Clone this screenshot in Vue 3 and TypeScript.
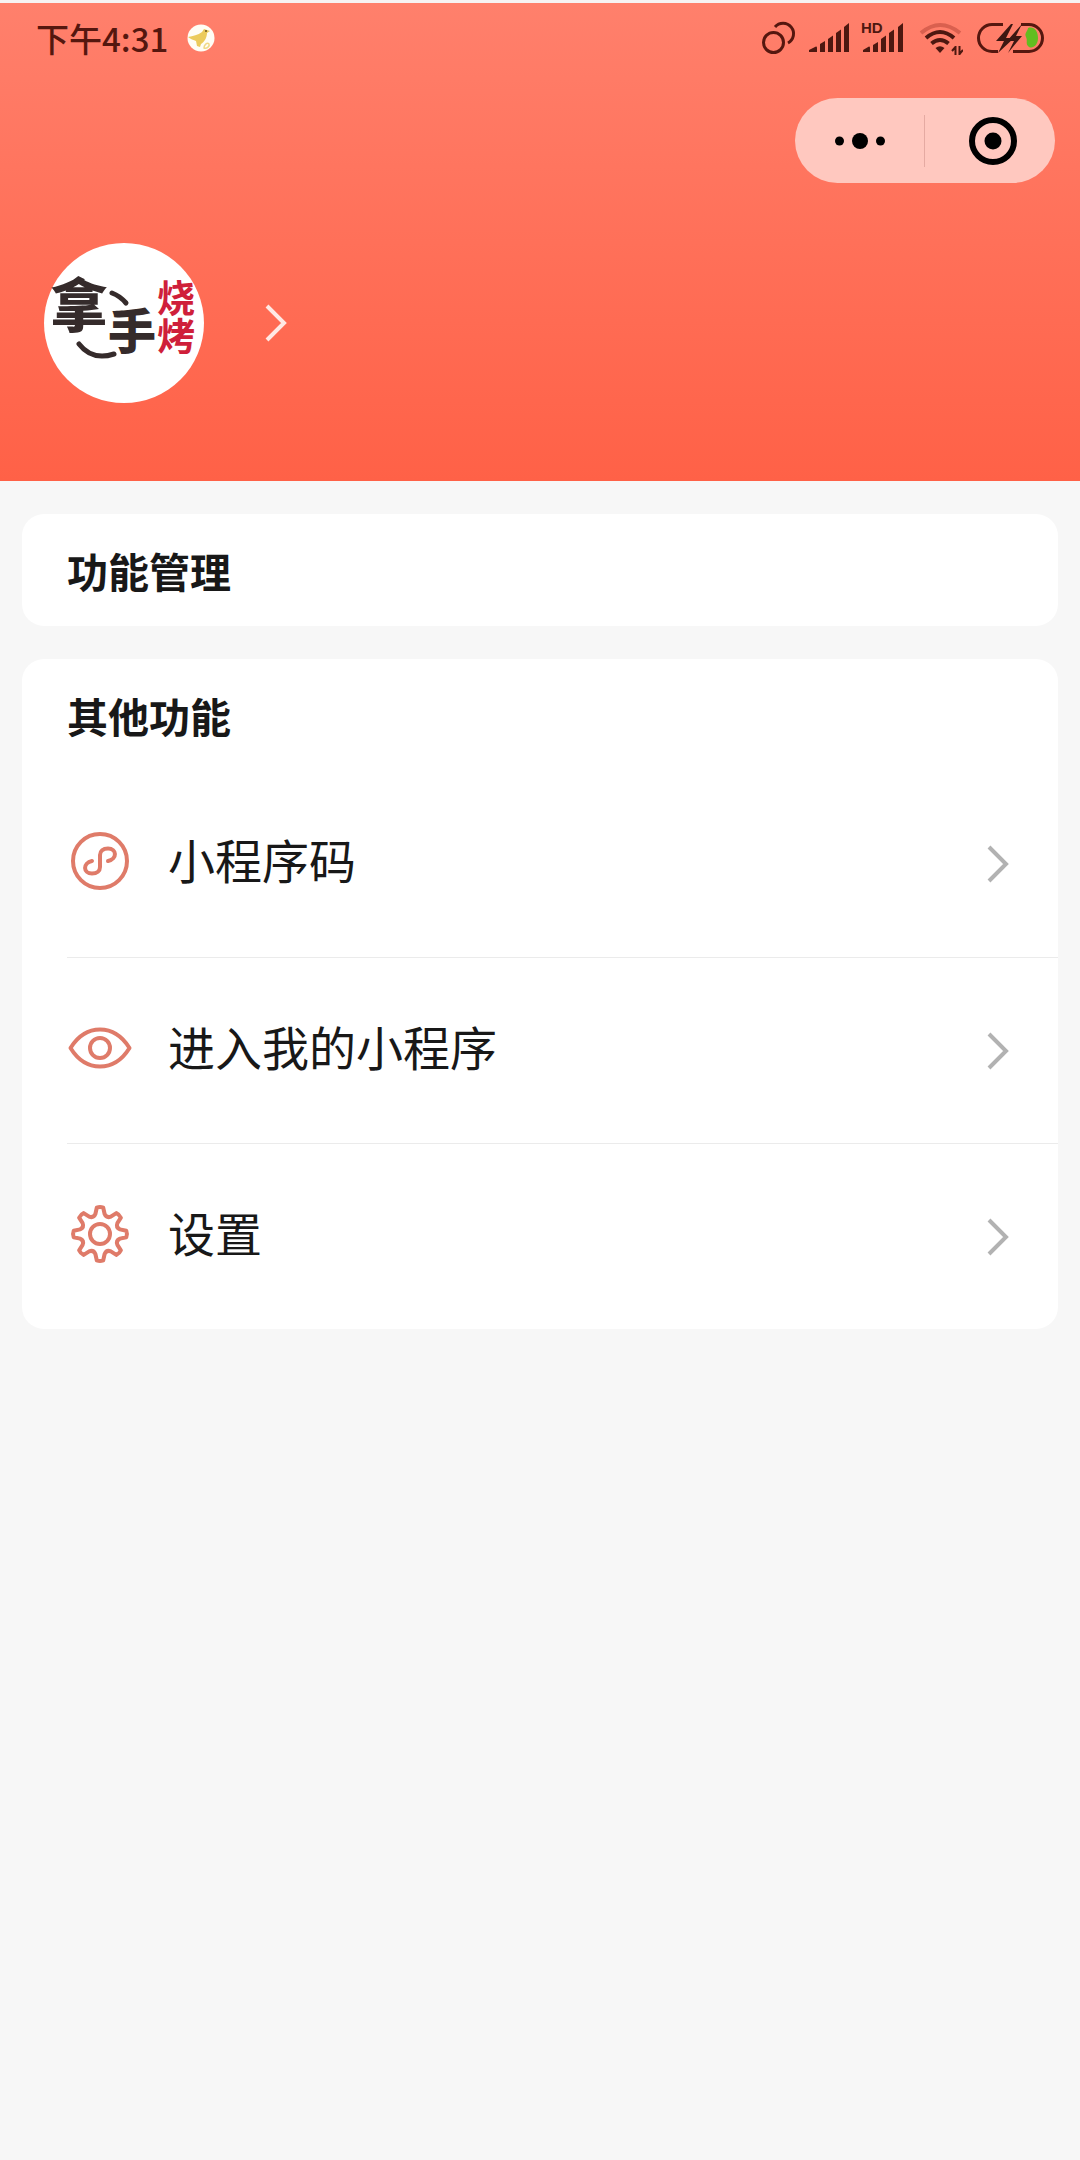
<script setup lang="ts">
type IconName = 'code' | 'eye' | 'gear'

interface MenuItem {
  icon: IconName
  label: string
}

const items: MenuItem[] = [
  { icon: 'code', label: '小程序码' },
  { icon: 'eye', label: '进入我的小程序' },
  { icon: 'gear', label: '设置' },
]

// Point on a circle around the centre of the 64px icon box.
function polar(radius: number, degrees: number): string {
  const a = ((degrees - 90) * Math.PI) / 180
  return `${(32 + radius * Math.cos(a)).toFixed(2)} ${(32 + radius * Math.sin(a)).toFixed(2)}`
}

// Outline of an eight-toothed gear with curved valleys.
function gearPath(): string {
  let d = `M${polar(26.5, -7)}`
  for (let i = 0; i < 8; i++) {
    const t = i * 45
    d += ` Q${polar(27.6, t)} ${polar(26.5, t + 7)}`
    d += ` L${polar(20.5, t + 13)}`
    d += ` Q${polar(17, t + 22.5)} ${polar(20.5, t + 32)}`
    d += ` L${polar(26.5, t + 38)}`
  }
  return d + 'Z'
}

const gear = gearPath()
</script>

<template>
  <div class="page">
    <header class="header">
      <div class="status">
        <span class="time">下午4:31</span>
        <svg class="bird" width="28" height="28" viewBox="0 0 28 28" aria-hidden="true">
          <circle cx="14" cy="14" r="13.5" fill="#fffdf5" />
          <path d="M1 13C6 12 11 11 15 8L17 5L20 6L23 7L20 9C20 14 17 18 14 20L13 23L10 22L9 17C7 16 3 15 1 13Z" fill="#eccb5c" />
          <path d="M17 24C17 21 20 18 22 20C23 22 20 25 17 24Z" fill="none" stroke="#f0d987" stroke-width="1.5" />
          <circle cx="19" cy="7" r="1" fill="#6b5320" />
        </svg>
        <div class="indicators">
          <svg width="35" height="34" viewBox="0 0 35 34" fill="none" stroke="#55170f" stroke-width="3" aria-hidden="true">
            <circle cx="11.5" cy="21.5" r="10" />
            <path d="M13 6A10.5 10.5 0 1 1 26 22" />
          </svg>
          <svg width="40" height="34" viewBox="0 0 40 34" fill="#4d1810" aria-hidden="true">
            <path d="M0 31V29L7 25.500Q8 25.500 8 26.500V31Z" />
            <path d="M11 23L16 20V31H11Z" />
            <path d="M19 18L24 14.500V31H19Z" />
            <path d="M27 12L32 8.500V31H27Z" />
            <path d="M35 6L40 2V31H35Z" />
          </svg>
          <svg class="spill" width="44" height="34" viewBox="0 0 44 34" fill="#4d1810" aria-hidden="true">
            <text class="hd" x="0" y="12">HD</text>
            <path d="M2 31V29L8 25.500Q9 25.500 9 26.500V31Z" />
            <path d="M12 24L17 21V31H12Z" />
            <path d="M20 18L25 14.500V31H20Z" />
            <path d="M28 12L33 8.500V31H28Z" />
            <path d="M37 6L42 2V31H37Z" />
          </svg>
          <svg width="46" height="34" viewBox="0 0 46 34" fill="none" stroke="#4d1810" stroke-width="4" aria-hidden="true">
            <path d="M4 12Q23 -4 43 12" stroke="#d9604f" />
            <path d="M9 17Q23 5 37 17" />
            <path d="M14.500 22.500Q23 15.500 31.500 22.500" />
            <path d="M18.500 27Q23 23.500 27.500 27L23 32Z" fill="#4d1810" stroke="none" />
            <path d="M38.500 25V34M42.500 25V34M38.500 26L35 30M42.500 33L46 29" stroke-width="2" />
          </svg>
          <svg width="70" height="34" viewBox="0 0 70 34" fill="none" aria-hidden="true">
            <path d="M53 7C59 5 63 10 63 17C63 24 58 28 54 26C50 23 53 20 51 16C49 12 53 10 53 7Z" fill="#62bd20" />
            <path d="M28 3.500H17A13.500 13.500 0 0 0 17 30.500H23M46 3.500H54A13.500 13.500 0 0 1 54 30.500H38" stroke="#55170f" stroke-width="3" />
            <path d="M36 3L21 20H29L23 32L39 17H31L38 3Z" fill="#3c1712" />
            <path d="M47 3L32 20H39L33 32L47 15H41Z" fill="#3c1712" />
          </svg>
        </div>
      </div>

      <div class="capsule">
        <button type="button" class="capsule-btn more" aria-label="更多">
          <svg width="52" height="52" viewBox="0 0 52 52" aria-hidden="true">
            <circle cx="5.500" cy="26" r="4.500" />
            <circle cx="26" cy="26" r="8" />
            <circle cx="46.500" cy="26" r="4.500" />
          </svg>
        </button>
        <button type="button" class="capsule-btn close" aria-label="关闭">
          <svg width="52" height="52" viewBox="0 0 52 52" aria-hidden="true">
            <circle cx="26" cy="26" r="21" fill="none" stroke="#000" stroke-width="6" />
            <circle cx="26" cy="26" r="8.500" />
          </svg>
        </button>
      </div>

      <a href="#" class="profile">
        <svg class="avatar spill" width="160" height="160" viewBox="0 0 160 160" role="img" aria-label="拿手烧烤">
          <circle cx="80" cy="80" r="80" fill="#fff" />
          <g fill="#352b2b">
            <text class="brush" x="6" y="84" font-size="58">拿</text>
            <text class="brush" x="64" y="106" font-size="48">手</text>
          </g>
          <g fill="none" stroke="#352b2b" stroke-linecap="round">
            <path d="M68 50Q76 53 82 60" stroke-width="5" />
            <path d="M35 101Q48 118 70 111" stroke-width="5" />
          </g>
          <text class="side" x="132" y="36" font-size="38" fill="#cf1f3a">烧烤</text>
        </svg>
        <svg class="chevron" width="24" height="40" viewBox="0 0 24 40" aria-hidden="true">
          <path d="M3 3L20 20L3 37" />
        </svg>
      </a>
    </header>

    <main class="content">
      <section class="card">
        <h2 class="title">功能管理</h2>
      </section>

      <section class="card">
        <h2 class="title">其他功能</h2>
        <nav class="menu">
          <a v-for="item in items" :key="item.label" href="#" class="row">
            <svg class="icon" width="66" height="70" viewBox="-1 0 66 70" aria-hidden="true">
              <template v-if="item.icon === 'code'">
                <circle cx="32" cy="32" r="27" />
                <path d="M40 32C49.500 30 49 19.500 40 19.500C35 19.500 32 22 32 26V38C32 42 29 44.500 24 44.500C15 44.500 14.500 34 24 32" />
              </template>
              <template v-else-if="item.icon === 'eye'">
                <path d="M2.500 32Q14 13.500 32 13.500T61.500 32Q50 50.500 32 50.500T2.500 32Z" />
                <circle cx="32" cy="32" r="10" />
              </template>
              <template v-else>
                <path :d="gear" />
                <circle cx="32" cy="32" r="10" />
              </template>
            </svg>
            <span class="label">{{ item.label }}</span>
            <svg class="chevron" width="24" height="40" viewBox="0 0 24 40" aria-hidden="true">
              <path d="M3 3L20 20L3 37" />
            </svg>
          </a>
        </nav>
      </section>
    </main>
  </div>
</template>

<style>
body {
  margin: 0;
  background: #f7f7f7;
}
</style>

<style scoped>
.page {
  box-sizing: border-box;
  min-height: 100vh;
  border-top: 3px solid #f7f3f3;
  background: #f7f7f7;
  color: #181818;
  font-family: "Noto Sans CJK SC", "Noto Sans", sans-serif;
}

.header {
  display: flex;
  flex-direction: column;
  padding-bottom: 78px;
  background: linear-gradient(#ff806c, #ff7059 50%, #ff6147);
}

.status {
  display: flex;
  align-items: center;
  height: 70px;
  padding: 0 35px 0 36px;
}

.time {
  color: #55170f;
  font-size: 33px;
  font-weight: 500;
  line-height: 40px;
}

.bird {
  margin-left: 19px;
}

.indicators {
  display: flex;
  gap: 12px;
  margin-left: auto;
}

.spill {
  overflow: visible;
}

.hd {
  font: bold 15px "Liberation Sans", sans-serif;
}

.capsule {
  display: flex;
  align-items: center;
  align-self: flex-end;
  box-sizing: border-box;
  width: 260px;
  height: 85px;
  margin: 25px 25px 60px 0;
  border-radius: 43px;
  background: #ffc8bf;
}

.capsule-btn {
  display: flex;
  flex: 0 0 50%;
  align-items: center;
  justify-content: center;
  box-sizing: border-box;
  height: 52px;
  padding: 0;
  border: 0;
  background: none;
}

.more {
  border-right: 1px solid #e5aaa2;
}

.close {
  padding-left: 6px;
}

.profile {
  display: flex;
  gap: 60px;
  align-items: center;
  align-self: flex-start;
  margin-left: 44px;
  color: #ffe9e4;
}

.brush {
  font-weight: 900;
}

.side {
  font-weight: 700;
  writing-mode: vertical-rl;
}

.chevron {
  flex: none;
  fill: none;
  stroke: currentColor;
  stroke-width: 4;
}

.content {
  display: flex;
  flex-direction: column;
  gap: 33px;
  padding: 33px 22px;
}

.card {
  padding-left: 45px;
  border-radius: 22px;
  background: #fff;
}

.title {
  margin: 0;
  padding: 26px 0;
  font-size: 41px;
  font-weight: 700;
  line-height: 60px;
}

.row {
  display: flex;
  align-items: center;
  box-sizing: border-box;
  height: 186px;
  padding-right: 48px;
  color: #b2b2b2;
  text-decoration: none;
}

.row + .row {
  border-top: 1px solid #ebebeb;
}

.icon {
  flex: none;
  margin-right: 35px;
  fill: none;
  stroke: #df7b69;
  stroke-width: 4;
  stroke-linecap: round;
  stroke-linejoin: round;
}

.label {
  flex: 1;
  padding-bottom: 10px;
  color: #181818;
  font-size: 47px;
  line-height: 68px;
}
</style>
